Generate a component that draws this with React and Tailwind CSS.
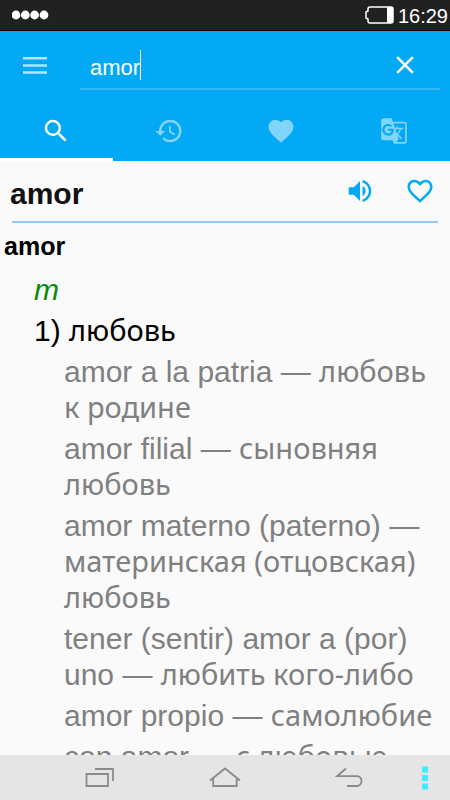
import React, { useState } from 'react';
import {
    MdClose,
    MdFavorite,
    MdFavoriteBorder,
    MdGTranslate,
    MdHistory,
    MdSearch,
    MdVolumeUp,
} from 'react-icons/md';

const tabs = [
    { id: 'search', label: 'Search', Icon: MdSearch, size: 30 },
    { id: 'history', label: 'History', Icon: MdHistory, size: 30 },
    { id: 'favorites', label: 'Favorites', Icon: MdFavorite, size: 30 },
    { id: 'translate', label: 'Translate', Icon: MdGTranslate, size: 28 },
];

const examples = [
    { es: 'amor a la patria', ru: 'любовь к родине' },
    { es: 'amor filial', ru: 'сыновняя любовь' },
    { es: 'amor materno (paterno)', ru: 'материнская (отцовская) любовь' },
    { es: 'tener (sentir) amor a (por) uno', ru: 'любить кого-либо' },
    { es: 'amor propio', ru: 'самолюбие' },
    { es: 'con amor', ru: 'с любовью' },
];

function Russian({ children }) {
    return (
        <span lang="ru" className="font-['Noto_Sans',sans-serif] text-[29px] leading-none">
            {children}
        </span>
    );
}

function StatusBar() {
    return (
        <div className="flex h-[31px] shrink-0 items-center justify-between border-b border-[#1a0a08] bg-[#212121] pr-[2px] pl-3 text-white">
            <svg width="37" height="10" viewBox="0 0 37 10" fill="currentColor" aria-hidden="true">
                <circle cx="4" cy="5" r="4.4" />
                <circle cx="13.3" cy="5" r="4.4" />
                <circle cx="22.6" cy="5" r="4.4" />
                <circle cx="32" cy="5" r="4.4" />
            </svg>
            <div className="flex items-center gap-1">
                <svg width="29" height="18" viewBox="0 0 29 18" fill="none" aria-hidden="true">
                    <path
                        d="M5 1h21a2 2 0 0 1 2 2v12a2 2 0 0 1-2 2H5a2 2 0 0 1-2-2v-2L1 12V6l2-1V3a2 2 0 0 1 2-2z"
                        stroke="#fff"
                        strokeWidth="1.5"
                    />
                    <path d="M22 1h4a2 2 0 0 1 2 2v12a2 2 0 0 1-2 2h-4z" fill="#fff" />
                </svg>
                <span className="pt-[2px] text-[20px] leading-6">16:29</span>
            </div>
        </div>
    );
}

function SearchBar({ query, setQuery }) {
    return (
        <div className="flex items-center pt-[11px] pr-[10px] pl-5">
            <button type="button" aria-label="Menu" className="flex h-[30px] w-[30px] items-center justify-center">
                <svg width="24" height="18" viewBox="0 0 24 18" fill="#b3e5fc">
                    <path d="M0 0h24v2.6H0zM0 7.2h24v2.6H0zM0 14.2h24v2.6H0z" />
                </svg>
            </button>
            <div className="ml-[30px] flex h-12 flex-1 items-center border-b-2 border-[#35b8f8] pr-5 pl-[10px]">
                <input
                    type="text"
                    aria-label="Search word"
                    value={query}
                    onChange={(e) => setQuery(e.target.value)}
                    className="field-sizing-content bg-transparent pt-[6px] text-[22px] leading-8 text-white caret-transparent outline-none"
                />
                <span className="h-[30px] w-px bg-white"></span>
                <button type="button" aria-label="Clear" onClick={() => setQuery('')} className="ml-auto">
                    <MdClose size={30} />
                </button>
            </div>
        </div>
    );
}

function NavBar() {
    return (
        <nav className="flex h-[45px] shrink-0 items-center bg-[#e5e5e5] text-[#8a8a8a]">
            <div className="flex flex-1 justify-center gap-[94px] pl-7">
                <button type="button" aria-label="Recent apps">
                    <svg width="30" height="22" viewBox="0 0 30 22" fill="none" stroke="currentColor" strokeWidth="1.8">
                        <path d="M1.5 7h21.5v12H1.5z" />
                        <path d="M10 2h18v12" />
                    </svg>
                </button>
                <button type="button" aria-label="Home">
                    <svg width="32" height="22" viewBox="0 0 32 22" fill="none" stroke="currentColor" strokeWidth="1.8">
                        <path d="M1 13.5L16 1.5l15 12M4.2 12v7h23.5v-7" />
                    </svg>
                </button>
                <button type="button" aria-label="Back">
                    <svg width="30" height="22" viewBox="0 0 30 22" fill="none" stroke="currentColor" strokeWidth="1.8">
                        <path d="M11 1.5L2 9.2h20.5a5 5 0 0 1 0 9.8H12" />
                    </svg>
                </button>
            </div>
            <button type="button" aria-label="More" className="mr-[21px]">
                <svg width="8" height="24" viewBox="0 0 8 24" fill="#42ecf8">
                    <path d="M1 0.5h6v6H1zM1 9h6v6H1zM1 17.5h6v6H1z" />
                </svg>
            </button>
        </nav>
    );
}

function App() {
    const [query, setQuery] = useState('amor');
    const [activeTab, setActiveTab] = useState('search');

    return (
        <div className="flex h-dvh flex-col bg-[#fafafa] font-['Liberation_Sans',Arial,sans-serif]">
            <StatusBar />
            <header className="shrink-0 bg-[#03a9f4] text-white">
                <SearchBar query={query} setQuery={setQuery} />
                <div role="tablist" className="mt-[11px] grid grid-cols-4">
                    {tabs.map(({ id, label, Icon, size }) => (
                        <button
                            key={id}
                            type="button"
                            role="tab"
                            aria-label={label}
                            aria-selected={activeTab === id}
                            onClick={() => setActiveTab(id)}
                            className={`flex h-[60px] items-center justify-center border-b-3 pt-[3px] ${
                                activeTab === id ? 'border-white' : 'border-transparent text-[#81d4fa]'
                            }`}
                        >
                            <Icon size={size} />
                        </button>
                    ))}
                </div>
            </header>

            <main className="min-h-0 flex-1 overflow-hidden">
                <div className="mr-3 ml-3 flex h-[62px] items-center border-b-2 border-[#90caf9]">
                    <h1 className="-ml-[2px] flex-1 pt-[6px] text-[30px] leading-9 font-bold text-[#111]">amor</h1>
                    <button type="button" aria-label="Listen" className="mr-[30px] text-[#03a9f4]">
                        <MdVolumeUp size={30} />
                    </button>
                    <button type="button" aria-label="Add to favorites" className="mr-[3px] text-[#03a9f4]">
                        <MdFavoriteBorder size={30} />
                    </button>
                </div>

                <article className="pt-[7px] pl-1 text-[30px] leading-9 text-black">
                    <h2 className="text-[25px] leading-8 font-bold">amor</h2>
                    <div className="mt-[10px] flex flex-col gap-[5px] pl-[30px]">
                        <p className="text-[#0a8a0a] italic">m</p>
                        <p>
                            1) <Russian>любовь</Russian>
                        </p>
                        <ul className="flex flex-col gap-[5px] pr-[10px] pl-[30px] text-[#808080]">
                            {examples.map(({ es, ru }) => (
                                <li key={es}>
                                    {es} — <Russian>{ru}</Russian>
                                </li>
                            ))}
                        </ul>
                    </div>
                </article>
            </main>
            <NavBar />
        </div>
    );
}

export default App;
